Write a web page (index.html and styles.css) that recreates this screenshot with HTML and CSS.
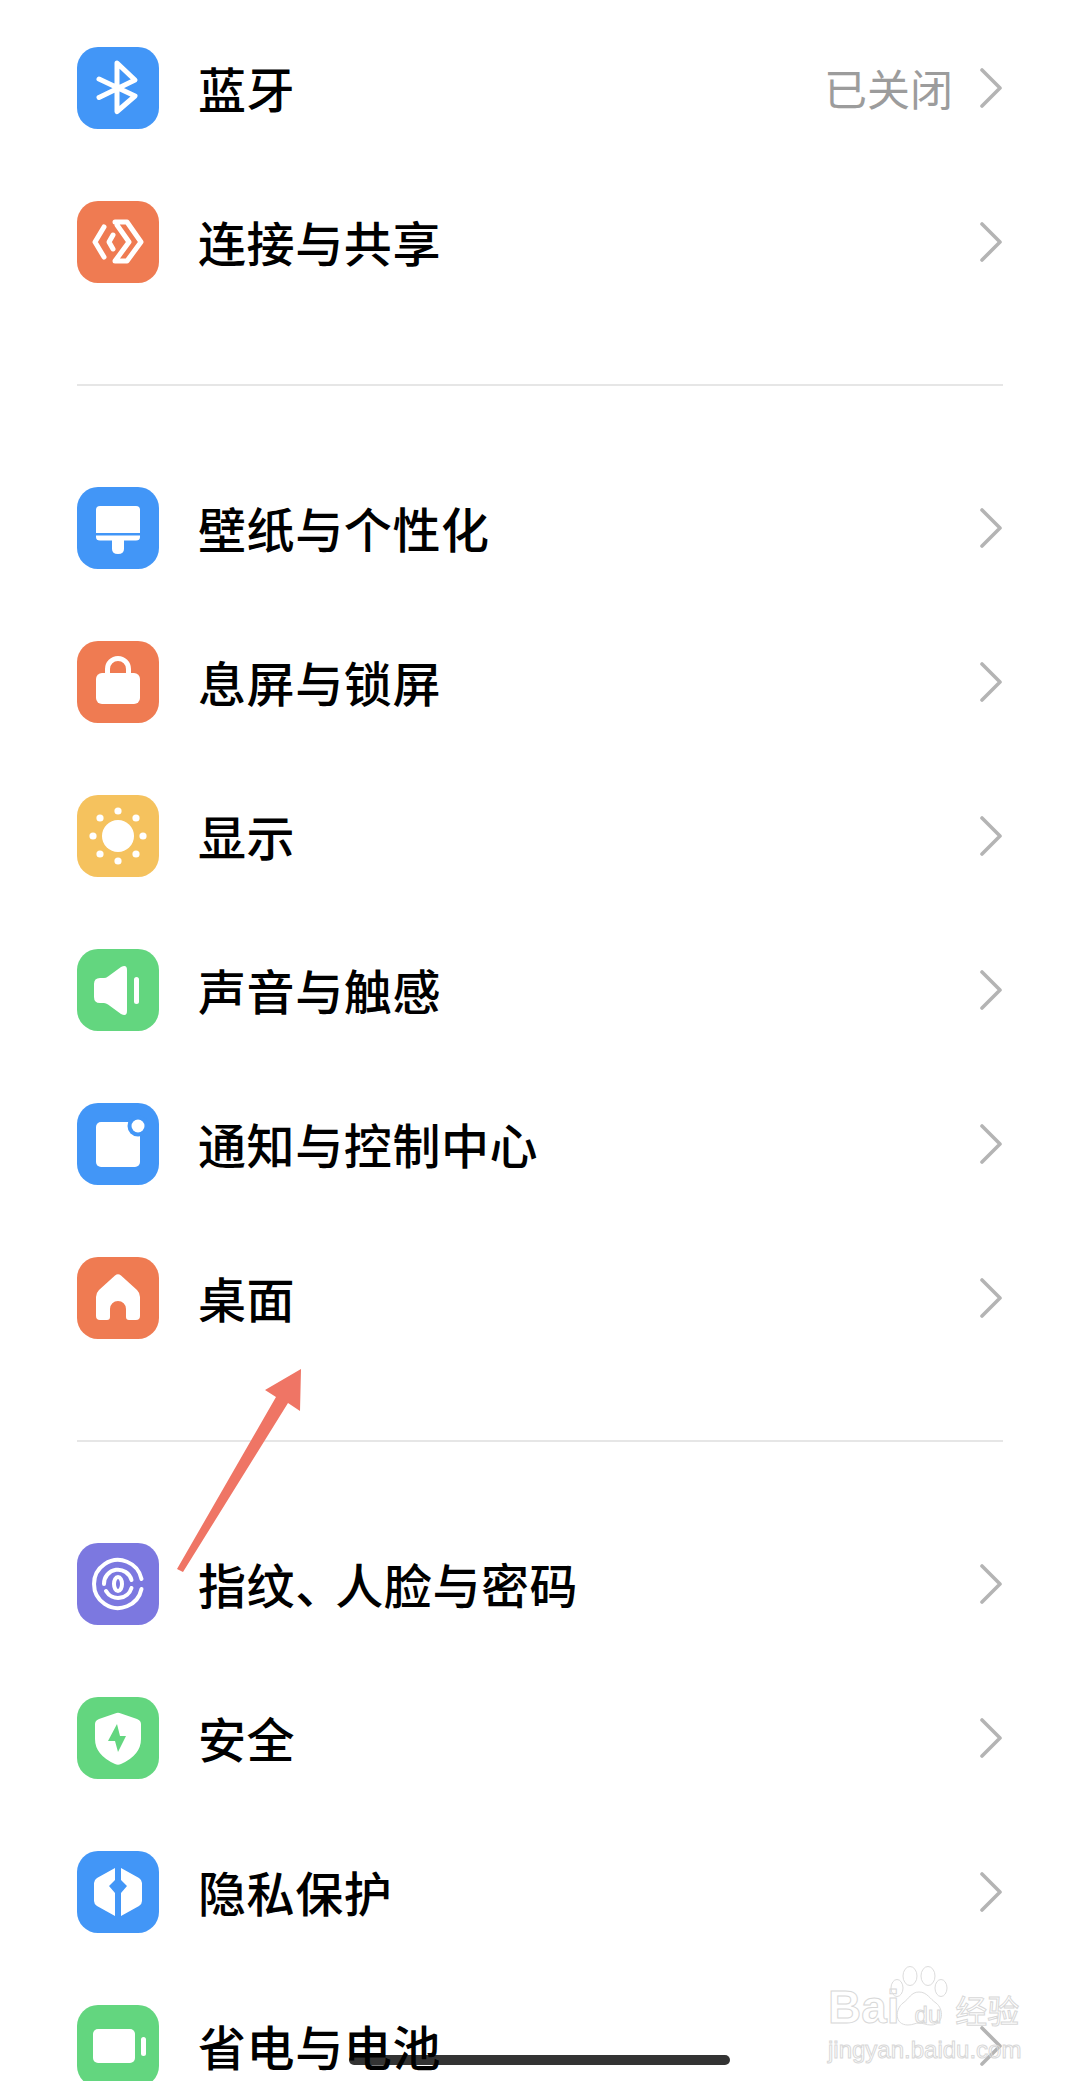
FILE: index.html
```html
<!DOCTYPE html>
<html lang="zh-CN">
<head>
  <meta charset="UTF-8">
  <title>设置</title>
  <meta name="viewport" content="width=device-width, initial-scale=1">
  <link rel="stylesheet" href="styles.css">
</head>
<body>
  <svg class="defs" width="0" height="0">
    <symbol id="chevron" viewBox="0 0 24 40">
      <path d="M3 2L21 20L3 38" fill="none" stroke="currentColor" stroke-width="3.6" stroke-linecap="round" stroke-linejoin="round"/>
    </symbol>
  </svg>

  <main class="settings">
    <section class="group">
      <div class="row">
        <svg class="icon blue" viewBox="0 0 82 82">
          <path d="M22 32L58 49L40 64.500V16L58 33L22 50.500" fill="none" stroke="#fff" stroke-width="5" stroke-linecap="round" stroke-linejoin="round"/>
        </svg>
        <span class="label">蓝牙</span>
        <span class="value">已关闭</span>
        <svg class="chevron"><use href="#chevron"/></svg>
      </div>
      <div class="row">
        <svg class="icon orange" viewBox="0 0 82 82">
          <g fill="none" stroke="#fff" stroke-width="5" stroke-linejoin="round" stroke-linecap="round">
            <path d="M38 21H50L64 41L50 60H38L52 41L40 24"/>
            <path d="M27 26L18 41L27 56"/>
            <path d="M36 34L32 41L36 48"/>
          </g>
        </svg>
        <span class="label">连接与共享</span>
        <svg class="chevron"><use href="#chevron"/></svg>
      </div>
    </section>

    <section class="group">
      <div class="row">
        <svg class="icon blue" viewBox="0 0 82 82">
          <g fill="#fff">
            <path d="M23 19H59Q63 19 63 23V46H19V23Q19 19 23 19Z"/>
            <path d="M19 48.500H63V50Q63 53.500 59 53.500H47V62Q47 67 41 67Q35 67 35 62V53.500H23Q19 53.500 19 50Z"/>
          </g>
        </svg>
        <span class="label">壁纸与个性化</span>
        <svg class="chevron"><use href="#chevron"/></svg>
      </div>
      <div class="row">
        <svg class="icon orange" viewBox="0 0 82 82">
          <path d="M30.500 33V28A10.500 10.500 0 0 1 51.500 28V33" fill="none" stroke="#fff" stroke-width="5"/>
          <rect x="19" y="32" width="44" height="31" rx="6" fill="#fff"/>
        </svg>
        <span class="label">息屏与锁屏</span>
        <svg class="chevron"><use href="#chevron"/></svg>
      </div>
      <div class="row">
        <svg class="icon yellow" viewBox="0 0 82 82">
          <g fill="#fff">
            <circle cx="41" cy="41" r="16"/>
            <circle cx="41" cy="16" r="3.600"/>
            <circle cx="41" cy="66" r="3.600"/>
            <circle cx="16" cy="41" r="3.600"/>
            <circle cx="66" cy="41" r="3.600"/>
            <circle cx="23" cy="23" r="3.600"/>
            <circle cx="59" cy="23" r="3.600"/>
            <circle cx="23" cy="59" r="3.600"/>
            <circle cx="59" cy="59" r="3.600"/>
          </g>
        </svg>
        <span class="label">显示</span>
        <svg class="chevron"><use href="#chevron"/></svg>
      </div>
      <div class="row">
        <svg class="icon green" viewBox="0 0 82 82">
          <g fill="#fff">
            <path d="M23 29H27Q29 29 31 27.500L44 18Q50 15 50 21V62Q50 68 44 65L31 55.500Q29 54 27 54H23Q17 54 17 48V35Q17 29 23 29Z"/>
            <rect x="57" y="28" width="5" height="27" rx="2.500"/>
          </g>
        </svg>
        <span class="label">声音与触感</span>
        <svg class="chevron"><use href="#chevron"/></svg>
      </div>
      <div class="row">
        <svg class="icon blue" viewBox="0 0 82 82">
          <rect x="19" y="19" width="44" height="45" rx="5" fill="#fff"/>
          <circle cx="61" cy="23" r="10.500" fill="#4296f7"/>
          <circle cx="61" cy="23" r="6.500" fill="#fff"/>
        </svg>
        <span class="label">通知与控制中心</span>
        <svg class="chevron"><use href="#chevron"/></svg>
      </div>
      <div class="row">
        <svg class="icon orange" viewBox="0 0 82 82">
          <path d="M38 18.500Q41 16 44 18.500L60 33Q63 36 63 40V59Q63 63 59 63H52Q49 63 49 60V52A8 8 0 0 0 33 52V60Q33 63 30 63H23Q19 63 19 59V40Q19 36 22 33Z" fill="#fff"/>
        </svg>
        <span class="label">桌面</span>
        <svg class="chevron"><use href="#chevron"/></svg>
      </div>
    </section>

    <section class="group">
      <div class="row">
        <svg class="icon purple" viewBox="0 0 82 82">
          <g fill="none" stroke="#fff" stroke-width="4" stroke-linecap="round">
            <path d="M64.500 36A24 24 0 1 0 64.500 46"/>
            <path d="M54.500 37A14 14 0 0 0 27 41"/>
            <path d="M29 48A14 14 0 0 0 54.500 45"/>
            <ellipse cx="41" cy="41" rx="4" ry="7"/>
          </g>
        </svg>
        <span class="label label-tight">指纹<span class="comma">、</span>人脸与密码</span>
        <svg class="chevron"><use href="#chevron"/></svg>
      </div>
      <div class="row">
        <svg class="icon green" viewBox="0 0 82 82">
          <path d="M38 16.500Q41 15 44 16.500L60 22Q64 23.500 64 27V42Q64 58 44 67Q41 68.500 38 67Q18 58 18 42V27Q18 23.500 22 22Z" fill="#fff"/>
          <path d="M40 27L31 44H38L41 55L49 39H43Z" fill="#63d67f"/>
        </svg>
        <span class="label">安全</span>
        <svg class="chevron"><use href="#chevron"/></svg>
      </div>
      <div class="row">
        <svg class="icon blue" viewBox="0 0 82 82">
          <g fill="#fff">
            <path d="M38 17V29L32 35L38 42V65L20 55Q17 53 17 50V32Q17 29 20 27Z"/>
            <path d="M44 17V29L50 35L44 42V65L62 55Q65 53 65 50V32Q65 29 62 27Z"/>
          </g>
        </svg>
        <span class="label">隐私保护</span>
        <svg class="chevron"><use href="#chevron"/></svg>
      </div>
      <div class="row">
        <svg class="icon green" viewBox="0 0 82 82">
          <g fill="#fff">
            <rect x="16" y="24" width="42" height="34" rx="5"/>
            <rect x="64" y="32" width="5" height="19" rx="2.500"/>
          </g>
        </svg>
        <span class="label">省电与电池</span>
        <svg class="chevron"><use href="#chevron"/></svg>
      </div>
    </section>
  </main>

  <!-- annotation arrow drawn over the list -->
  <svg class="arrow" viewBox="0 0 135 210">
    <path d="M7 204L13 207L118 38L130 46L131 4L95 25L106 32Z" fill="#ef7565"/>
  </svg>

  <div class="home-bar"></div>

  <div class="watermark">
    <svg class="paw" viewBox="0 0 60 62">
      <g fill="none" stroke="#dcdcdc" stroke-width="1">
        <ellipse cx="20" cy="11" rx="7" ry="9.500"/>
        <ellipse cx="38" cy="11" rx="7" ry="9.500"/>
        <ellipse cx="7" cy="23" rx="6" ry="8.500"/>
        <ellipse cx="51" cy="23" rx="6" ry="8.500"/>
        <path d="M29 27C21 27 19 34 13 38C5 44 4 60 18 60C23 60 25 58 29 58C33 58 36 60 41 60C54 60 54 44 46 38C40 34 37 27 29 27Z"/>
      </g>
    </svg>
    <div class="wm-top">
      <span class="wm-bai">Bai</span>
      <span class="wm-du">du</span>
      <span class="wm-cn">经验</span>
    </div>
    <div class="wm-url">jingyan.baidu.com</div>
  </div>
</body>
</html>
```

FILE: styles.css
```css
* {
  box-sizing: border-box;
}
html, body {
  margin: 0;
  padding: 0;
}
html {
  height: 2081px;
  overflow: hidden;
}
body {
  position: relative;
  width: 1080px;
  height: 2081px;
  overflow: hidden;
  background: #fff;
  color: #000;
  font-family: "Noto Sans CJK SC", "Noto Sans", sans-serif;
}
.defs {
  position: absolute;
}
.settings {
  padding: 11px 77px 0 77px;
}
.group {
  padding-bottom: 65px;
  margin-bottom: 65px;
  border-bottom: 2px solid #e6e6e6;
}
.group:last-child {
  border-bottom: none;
  margin-bottom: 0;
}
.row {
  display: flex;
  align-items: center;
  height: 154px;
}
.icon {
  flex: none;
  width: 82px;
  height: 82px;
  border-radius: 21px;
}
.blue {
  background: #4296f7;
}
.orange {
  background: #ef7b52;
}
.yellow {
  background: #f5c25e;
}
.green {
  background: #63d67f;
}
.purple {
  background: #7c78e0;
}
.label {
  flex: 1;
  margin-left: 39px;
  padding-bottom: 3px;
  font-size: 48px;
  font-weight: 500;
  letter-spacing: 0.6px;
  line-height: 60px;
}
.comma {
  letter-spacing: -12px;
  margin-right: 4px;
}
.value {
  font-size: 43px;
  color: #9c9c9c;
  margin-right: 26px;
  padding-bottom: 3px;
}
.chevron {
  flex: none;
  width: 24px;
  height: 40px;
  color: #b4b4b4;
}
.arrow {
  position: absolute;
  left: 170px;
  top: 1365px;
  width: 135px;
  height: 210px;
}
.home-bar {
  position: absolute;
  left: 349px;
  top: 2055px;
  width: 381px;
  height: 10px;
  border-radius: 5px;
  background: rgba(0, 0, 0, 0.8);
}
.watermark {
  position: absolute;
  left: 828px;
  top: 1965px;
  width: 200px;
  color: transparent;
  -webkit-text-stroke: 1px #d8d8d8;
  font-family: "Liberation Sans", sans-serif;
}
.paw {
  position: absolute;
  left: 62px;
  top: 0;
  width: 60px;
  height: 62px;
}
.wm-top {
  display: flex;
  align-items: baseline;
  height: 70px;
  padding-top: 20px;
}
.wm-bai {
  font-size: 46px;
  font-weight: 700;
  line-height: 44px;
}
.wm-du {
  margin-left: 15px;
  font-size: 24px;
  line-height: 24px;
}
.wm-cn {
  margin-left: 14px;
  font-family: "Noto Sans CJK SC", sans-serif;
  font-size: 32px;
  line-height: 44px;
}
.wm-url {
  font-size: 24px;
  line-height: 30px;
}
```
